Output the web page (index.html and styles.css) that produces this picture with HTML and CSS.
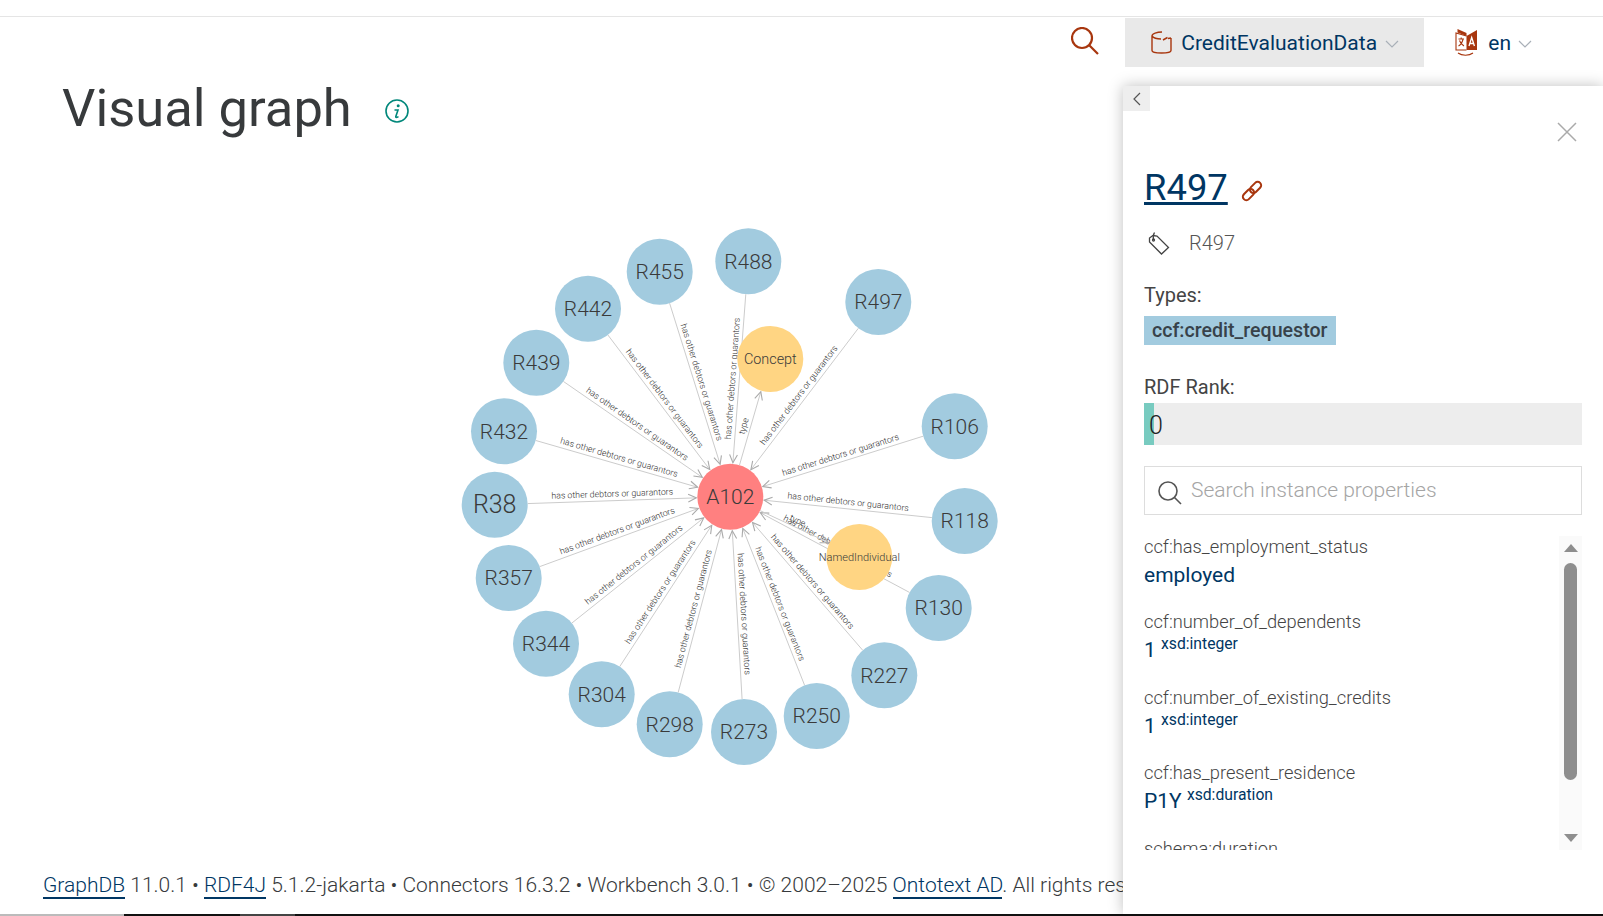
FILE: index.html
```html
<!DOCTYPE html>
<html lang="en">
<head>
    <meta charset="UTF-8">
    <meta name="viewport" content="width=device-width, initial-scale=1.0">
    <title>Visual graph</title>
    <link rel="stylesheet" href="styles.css">
    <script src="graph.js" defer></script>
</head>
<body>
    <div class="top-line"></div>

    <header class="header">
        <svg class="search-icon" viewBox="0 0 28 28" width="28" height="28">
            <circle cx="11" cy="11" r="10"></circle>
            <line x1="18" y1="18" x2="27" y2="27"></line>
        </svg>
        <div class="repo">
            <svg class="repo-icon" viewBox="0 0 21 23" width="21" height="23">
                <path d="M1 5 C1 2.5 6 1 11 1 M1 5 C3 7.5 7 8 10 8 M1 5 V19.5 C1 22.8 20 22.8 20 19.5 V7 M20 7 L17 7.5"></path>
                <path class="repo-dots" d="M12.5 3 v.1 M15.5 4.5 v.1 M16.5 6.5 L12 9 M11 11 v.1"></path>
            </svg>
            <span>CreditEvaluationData</span>
            <svg class="chevron" viewBox="0 0 14 8" width="14" height="8"><polyline points="1,1 7,7 13,1"></polyline></svg>
        </div>
        <div class="lang">
            <svg class="lang-icon" viewBox="0 0 23 27" width="23" height="27">
                <path class="lang-fill" d="M11.5 7 L22 1 V21 H11.5 Z M2.5 0 L11.5 4 V7 L2.5 3.5 Z"></path>
                <path class="lang-line" d="M11.5 7 L1 4 V21 H11.5 M3 24 C7 27 14 27 18 24"></path>
                <path class="lang-line" d="M3.5 10 H9 M6.2 8.5 V10 M8 10.5 C7 14 5.5 16 3.5 17 M4.5 11.5 C5.5 14.5 7 16 9 17"></path>
                <path class="lang-white" d="M14 17 L16.7 8.5 L19.4 17 M15 14.5 H18.4"></path>
            </svg>
            <span>en</span>
            <svg class="chevron" viewBox="0 0 14 8" width="14" height="8"><polyline points="1,1 7,7 13,1"></polyline></svg>
        </div>
    </header>

    <div class="title-row">
        <h1>Visual graph</h1>
        <svg class="info-icon" viewBox="0 0 24 24" width="24" height="24">
            <circle cx="12" cy="12" r="11"></circle>
            <circle class="info-dot" cx="13.2" cy="6.8" r="1.5"></circle>
            <path d="M9.5 11 H13 L10.8 17.5 Q10.4 19.2 13.5 17.6"></path>
        </svg>
    </div>

    <svg class="graph" id="graph" viewBox="0 150 1603 723"></svg>

    <footer class="footer">
        <a href="#">GraphDB</a> 11.0.1 • <a href="#">RDF4J</a> 5.1.2-jakarta • Connectors 16.3.2 • Workbench 3.0.1 • © 2002–2025 <a href="#">Ontotext AD</a>. All rights reserved.
    </footer>

    <div class="bottom-bar">
        <div class="bar-grey"></div>
        <div class="bar-black"></div>
        <div class="bar-dark"></div>
        <div class="bar-rest"></div>
    </div>

    <aside class="panel">
        <button class="panel-toggle">
            <svg viewBox="0 0 8 14" width="8" height="14"><polyline points="7,1 1,7 7,13"></polyline></svg>
        </button>
        <button class="panel-close">
            <svg viewBox="0 0 20 20" width="20" height="20"><path d="M1 1 L19 19 M19 1 L1 19"></path></svg>
        </button>

        <div class="res-title">
            <a href="#">R497</a>
            <svg class="link-icon" viewBox="0 0 24 24" width="24" height="24">
                <g transform="rotate(-45 12 12)">
                    <rect x="0.5" y="8.5" width="13" height="7" rx="3.5"></rect>
                    <rect x="10.5" y="8.5" width="13" height="7" rx="3.5"></rect>
                </g>
            </svg>
        </div>

        <div class="res-label">
            <svg class="tag-icon" viewBox="0 0 22 23" width="22" height="23">
                <path d="M1.5 10 L1.5 6 L5 3.5 L9 4 L20.5 15.5 L13.5 22 Z"></path>
                <path d="M5.5 8 C5 5 5.5 2 6.5 0.5"></path>
                <circle cx="5.5" cy="8" r="1"></circle>
            </svg>
            <span>R497</span>
        </div>

        <div class="section-label types-label">Types:</div>
        <div class="type-badge">ccf:credit_requestor</div>

        <div class="section-label rank-label">RDF Rank:</div>
        <div class="rank-bar">
            <div class="rank-fill"></div>
            <span class="rank-value">0</span>
        </div>

        <div class="prop-search">
            <svg class="prop-search-icon" viewBox="0 0 24 24" width="24" height="24">
                <circle cx="10" cy="10" r="9"></circle>
                <line x1="16.5" y1="16.5" x2="23" y2="23"></line>
            </svg>
            <span class="prop-search-text">Search instance properties</span>
        </div>

        <div class="props">
            <div class="props-list">
                <div class="prop">
                    <div class="prop-name">ccf:has_employment_status</div>
                    <div class="prop-value">employed</div>
                </div>
                <div class="prop">
                    <div class="prop-name">ccf:number_of_dependents</div>
                    <div class="prop-value">1 <span class="prop-type">xsd:integer</span></div>
                </div>
                <div class="prop">
                    <div class="prop-name">ccf:number_of_existing_credits</div>
                    <div class="prop-value">1 <span class="prop-type">xsd:integer</span></div>
                </div>
                <div class="prop">
                    <div class="prop-name">ccf:has_present_residence</div>
                    <div class="prop-value">P1Y <span class="prop-type">xsd:duration</span></div>
                </div>
                <div class="prop">
                    <div class="prop-name">schema:duration</div>
                    <div class="prop-value">P1Y</div>
                </div>
            </div>
            <div class="scrollbar">
                <div class="arrow-up"></div>
                <div class="thumb"></div>
                <div class="arrow-down"></div>
            </div>
        </div>
    </aside>
</body>
</html>
```

FILE: styles.css
```css
/* Page */
body {
    margin: 0;
    height: 916px;
    overflow: hidden;
    position: relative;
    display: flex;
    flex-direction: column;
    background-color: #fff;
    font-family: Roboto, sans-serif;
    color: #373a3c;
}

a {
    color: #003663;
    text-decoration: none;
    border-bottom: 2px solid #003663;
}

.top-line {
    height: 16px;
    border-bottom: 1px solid #e5e5e5;
    flex: none;
}

/* Header */
.header {
    display: flex;
    justify-content: flex-end;
    align-items: center;
    margin-top: 1px;
    padding-right: 71px;
    height: 49px;
    flex: none;
}

.search-icon {
    margin-right: 26px;
    margin-top: -3px;
    fill: none;
    stroke: #a8360e;
    stroke-width: 2.2;
}

.repo {
    display: flex;
    align-items: center;
    width: 299px;
    height: 49px;
    padding-left: 26px;
    box-sizing: border-box;
    background-color: #e9e9e9;
    margin-right: 31px;
    font-size: 21px;
    color: #003663;
}

.repo-icon {
    margin-right: 9px;
    fill: none;
    stroke: #a8360e;
    stroke-width: 1.4;
}

.repo-dots {
    stroke-width: 1.5;
}

.repo .chevron {
    margin-left: 8px;
}

.chevron {
    margin-top: 2px;
    fill: none;
    stroke: #a9b0b8;
    stroke-width: 1.2;
}

.lang {
    display: flex;
    align-items: center;
    font-size: 21px;
    color: #003663;
}

.lang-icon {
    margin-right: 10px;
}

.lang-fill {
    fill: #a8360e;
}

.lang-line {
    fill: none;
    stroke: #a8360e;
    stroke-width: 1.1;
}

.lang-white {
    fill: none;
    stroke: #fff;
    stroke-width: 1.3;
}

.lang .chevron {
    margin-left: 7px;
}

/* Title */
.title-row {
    display: flex;
    align-items: center;
    padding: 9px 0 0 62px;
    margin-bottom: 10px;
    height: 64px;
    flex: none;
}

h1 {
    margin: 0;
    font-size: 52.5px;
    font-weight: 400;
    line-height: 64px;
}

.info-icon {
    margin-left: 33px;
    margin-top: 6px;
    fill: none;
    stroke: #00877a;
    stroke-width: 1.6;
}

.info-dot {
    fill: #00877a;
    stroke: none;
}

/* Graph */
.graph {
    display: block;
    width: 1603px;
    height: 723px;
    flex: none;
}

.edge {
    stroke: #ccc;
    stroke-width: 1;
    fill: none;
}

.edge-arrow {
    stroke: #aaa;
    stroke-width: 1.1;
    fill: none;
}

.edge-label {
    font-size: 8.8px;
    font-weight: 300;
    fill: #2b2b2b;
    text-anchor: middle;
}

.node-instance {
    fill: #a2cbdf;
}

.node-main {
    fill: #ff8080;
}

.node-class {
    fill: #ffd583;
}

.node-label {
    font-size: 21px;
    font-weight: 300;
    fill: #3a3a3a;
    text-anchor: middle;
}

.node-label-big {
    font-size: 25px;
}

.node-label-mid {
    font-size: 14.4px;
}

.node-label-small {
    font-size: 11px;
}

/* Footer */
.footer {
    padding: 0 0 17px 43px;
    font-size: 21px;
    font-weight: 300;
    line-height: 24px;
    white-space: nowrap;
    flex: none;
}

.bottom-bar {
    display: flex;
    height: 2px;
    flex: none;
}

.bar-grey {
    width: 124px;
    background-color: #bbb;
}

.bar-black {
    width: 116px;
    background-color: #111;
}

.bar-dark {
    width: 55px;
    background-color: #444;
}

.bar-rest {
    flex: 1;
    background-color: #111;
}

/* Side panel */
.panel {
    position: absolute;
    top: 86px;
    left: 1123px;
    right: 0;
    bottom: 2px;
    padding: 80px 21px 0;
    background-color: #fff;
    box-shadow: 0 0 14px rgba(0, 0, 0, 0.25);
    box-sizing: border-box;
}

.panel-toggle {
    position: absolute;
    top: 0;
    left: 0;
    width: 27px;
    height: 25px;
    padding: 0;
    border: none;
    background-color: #eee;
}

.panel-toggle svg {
    display: block;
    margin: 0 auto;
    fill: none;
    stroke: #555;
    stroke-width: 1.2;
}

.panel-close {
    position: absolute;
    top: 36px;
    right: 26px;
    padding: 0;
    border: none;
    background: none;
}

.panel-close svg {
    display: block;
    fill: none;
    stroke: #aaa;
    stroke-width: 1.5;
}

.res-title {
    display: flex;
    align-items: center;
    height: 44px;
    font-size: 36.4px;
    line-height: 44px;
}

.res-title a {
    border-bottom: none;
    text-decoration: underline;
    text-decoration-thickness: 3px;
    text-underline-offset: 2px;
}

.link-icon {
    margin: 5px 0 0 12px;
    fill: none;
    stroke: #a8360e;
    stroke-width: 2;
}

.res-label {
    display: flex;
    align-items: center;
    margin-top: 21px;
    height: 24px;
    font-size: 20px;
    font-weight: 300;
    color: #555;
}

.tag-icon {
    margin: 0 19px 0 4px;
    fill: none;
    stroke: #444;
    stroke-width: 1.3;
}

.section-label {
    font-size: 20px;
    line-height: 24px;
    color: #444;
}

.types-label {
    margin-top: 28px;
}

.type-badge {
    display: inline-block;
    margin-top: 9px;
    padding: 0 8px;
    height: 29px;
    line-height: 29px;
    font-size: 19.6px;
    font-weight: 500;
    background-color: #a2cbdf;
    color: #37424a;
}

.rank-label {
    margin-top: 30px;
}

.rank-bar {
    position: relative;
    margin-top: 4px;
    height: 42px;
    background-color: #ededed;
}

.rank-fill {
    width: 10px;
    height: 42px;
    background-color: #78cbc0;
}

.rank-value {
    position: absolute;
    top: 2px;
    left: 5px;
    font-size: 25px;
    font-weight: 300;
    line-height: 42px;
    color: #222;
}

.prop-search {
    display: flex;
    align-items: center;
    margin-top: 21px;
    height: 49px;
    padding-left: 13px;
    box-sizing: border-box;
    border: 1px solid #ddd;
    font-size: 21px;
    font-weight: 300;
    color: #a5a5a5;
}

.prop-search-text {
    margin-top: -2px;
}

.prop-search-icon {
    margin: 4px 9px 0 0;
    fill: none;
    stroke: #555;
    stroke-width: 1.6;
}

/* Instance properties */
.props {
    display: flex;
    margin-top: 21px;
    height: 314px;
    overflow: hidden;
}

.props-list {
    flex: 1;
}

.prop {
    margin-bottom: 21.4px;
}

.prop-name {
    font-size: 18.3px;
    font-weight: 300;
    line-height: 22px;
    color: #444;
}

.prop-value {
    padding-top: 2px;
    font-size: 21px;
    line-height: 30px;
    color: #003663;
}

.prop-type {
    font-size: 15.7px;
    line-height: 1;
    vertical-align: 8px;
}

.scrollbar {
    display: flex;
    flex-direction: column;
    align-items: center;
    width: 23px;
    background-color: #fafafa;
}

.arrow-up {
    margin-top: 8px;
    border-left: 7.5px solid transparent;
    border-right: 7.5px solid transparent;
    border-bottom: 8px solid #8e8e8e;
}

.thumb {
    margin-top: 11px;
    width: 13px;
    height: 217px;
    border-radius: 7px;
    background-color: #8e8e8e;
}

.arrow-down {
    margin-top: 54px;
    border-left: 7.5px solid transparent;
    border-right: 7.5px solid transparent;
    border-top: 8px solid #8e8e8e;
}
```

FILE: graph.js
```js
const SVG_NS = 'http://www.w3.org/2000/svg';
const RADIUS = 33;
const EDGE_LABEL = 'has other debtors or guarantors';

const center = { x: 730.3, y: 496.7 };

// Neighbours of A102, label size only where it differs
const nodes = [
    { name: 'R455', x: 659.7, y: 271.7 },
    { name: 'R442', x: 588, y: 308.7 },
    { name: 'R439', x: 536.3, y: 362.7 },
    { name: 'R432', x: 504, y: 431.3 },
    { name: 'R38', x: 494.7, y: 504.7, size: 'node-label-big' },
    { name: 'R357', x: 508.7, y: 578 },
    { name: 'R344', x: 546, y: 643.7 },
    { name: 'R304', x: 601.7, y: 694.3 },
    { name: 'R298', x: 669.7, y: 724.3 },
    { name: 'R273', x: 744, y: 732 },
    { name: 'R250', x: 816.7, y: 716 },
    { name: 'R227', x: 884.3, y: 675.3 },
    { name: 'R130', x: 938.7, y: 608 },
    { name: 'R118', x: 964.7, y: 521 },
    { name: 'R106', x: 954.7, y: 426.3 },
    { name: 'R497', x: 878.3, y: 302 },
    { name: 'R488', x: 748.3, y: 261.3 }
];

const classes = [
    { name: 'Concept', x: 770.3, y: 359, size: 'node-label-mid' },
    { name: 'NamedIndividual', x: 859.3, y: 557, size: 'node-label-small' }
];

function add(parent, tag, attrs, text) {
    const el = document.createElementNS(SVG_NS, tag);
    for (const key in attrs) {
        el.setAttribute(key, attrs[key]);
    }
    if (text) {
        el.textContent = text;
    }
    parent.appendChild(el);
    return el;
}

function drawEdge(svg, from, to, label) {
    const angle = Math.atan2(to.y - from.y, to.x - from.x);
    const cos = Math.cos(angle);
    const sin = Math.sin(angle);
    const x1 = from.x + cos * RADIUS;
    const y1 = from.y + sin * RADIUS;
    const x2 = to.x - cos * (RADIUS + 1);
    const y2 = to.y - sin * (RADIUS + 1);

    add(svg, 'line', { class: 'edge', x1, y1, x2, y2 });

    // Open arrow head at the target end
    const wing = 9;
    const spread = 0.45;
    const a = `${x2 - Math.cos(angle - spread) * wing},${y2 - Math.sin(angle - spread) * wing}`;
    const b = `${x2 - Math.cos(angle + spread) * wing},${y2 - Math.sin(angle + spread) * wing}`;
    add(svg, 'polyline', { class: 'edge-arrow', points: `${a} ${x2},${y2} ${b}` });

    // Label stays readable, never upside down
    let deg = angle * 180 / Math.PI;
    if (deg > 90) deg -= 180;
    if (deg < -90) deg += 180;
    const mx = (from.x + to.x) / 2;
    const my = (from.y + to.y) / 2;
    add(svg, 'text', { class: 'edge-label', x: mx, y: my - 4, transform: `rotate(${deg} ${mx} ${my})` }, label);
}

function drawNode(svg, node, kind) {
    add(svg, 'circle', { class: kind, cx: node.x, cy: node.y, r: RADIUS });
    const cls = node.size ? `node-label ${node.size}` : 'node-label';
    add(svg, 'text', { class: cls, x: node.x, y: node.y, dy: '.35em' }, node.name);
}

const svg = document.getElementById('graph');

nodes.forEach(n => drawEdge(svg, n, center, EDGE_LABEL));
classes.forEach(n => drawEdge(svg, center, n, 'type'));

nodes.forEach(n => drawNode(svg, n, 'node-instance'));
classes.forEach(n => drawNode(svg, n, 'node-class'));
drawNode(svg, { name: 'A102', x: center.x, y: center.y }, 'node-main');
```
